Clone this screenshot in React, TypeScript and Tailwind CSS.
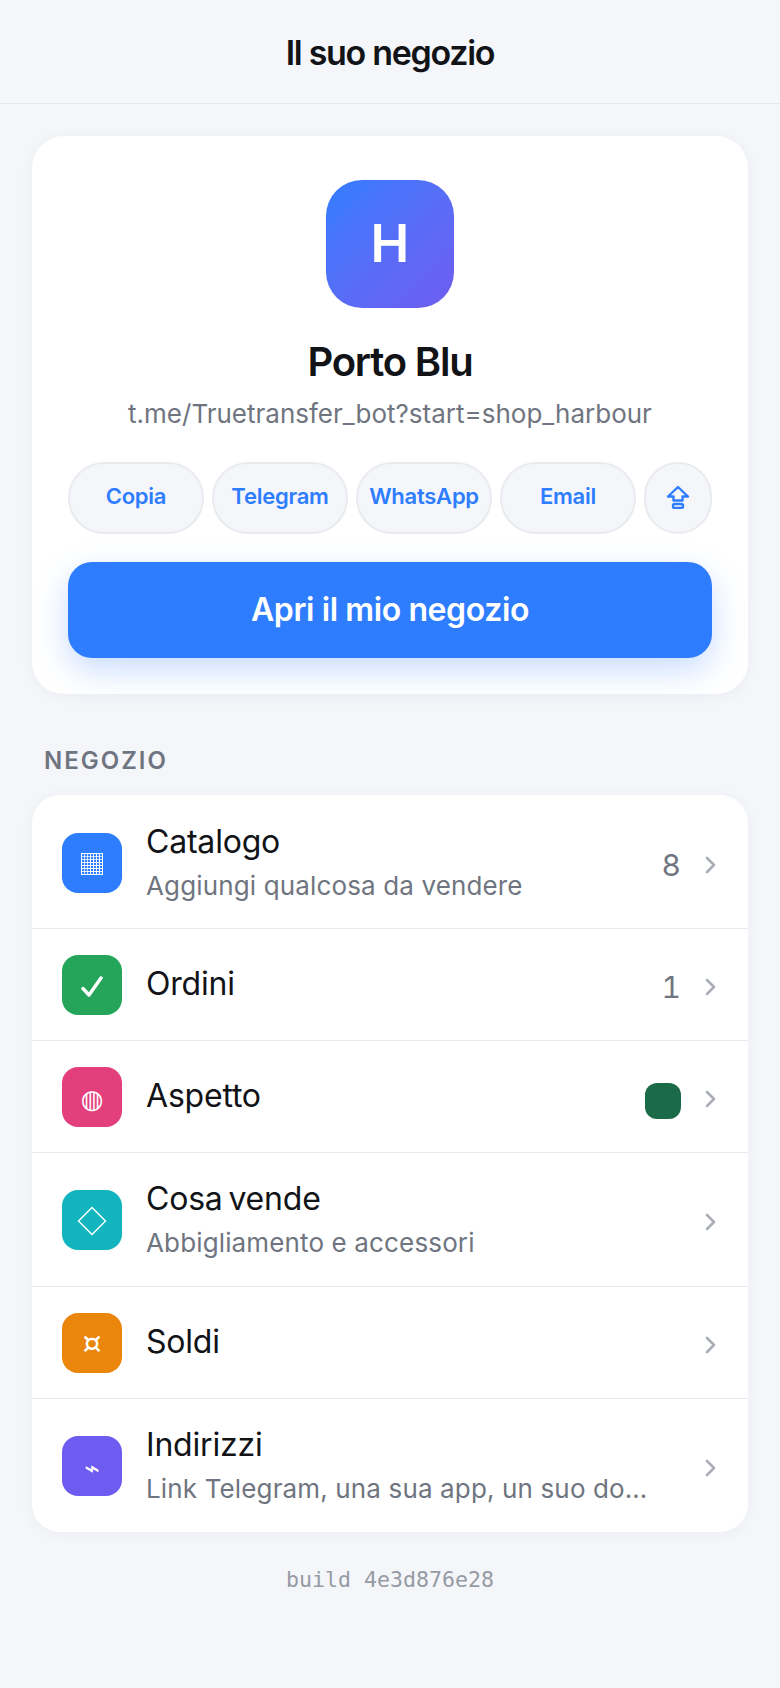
import React from "react";

function GridIcon() {
  const ticks = [0, 1, 2, 3, 4, 5, 6, 7];
  return (
    <svg width="22" height="22" viewBox="0 0 22 22" fill="none" stroke="#ffffff" strokeWidth="1" className="mt-[3px]">
      <rect x="0.5" y="0.5" width="21" height="21" />
      {ticks.map((t) => (
        <path key={t} d={`M${0.5 + t * 3} 0.5V21.5M0.5 ${0.5 + t * 3}H21.5`} opacity={t < 3 ? 0.75 : 0.95} />
      ))}
    </svg>
  );
}

function CheckIcon() {
  return (
    <svg width="22" height="22" viewBox="0 0 22 22" fill="none" className="mt-[5px]">
      <path d="M2 12.5 L8 19 L20 2" stroke="#ffffff" strokeWidth="3.4" strokeLinecap="round" strokeLinejoin="round" />
    </svg>
  );
}

function DiamondIcon() {
  return (
    <svg width="30" height="30" viewBox="0 0 30 30" fill="none" className="mt-[2px]">
      <path d="M15 1.5 L28.5 15 L15 28.5 L1.5 15 Z" stroke="#ffffff" strokeWidth="1.4" />
    </svg>
  );
}

function ShareIcon() {
  return (
    <svg width="24" height="24" viewBox="0 0 24 24" fill="none" stroke="#2e7dff" strokeWidth="2.4" strokeLinejoin="round">
      <path d="M12 2 L22 11.5 H16.5 V15.5 H7.5 V11.5 H2 Z" />
      <rect x="7" y="19" width="10" height="4" rx="1.6" />
    </svg>
  );
}

function Glyph({ children, cls }: { children: string; cls: string }) {
  return <span className={`font-['DejaVu_Sans'] leading-none text-white ${cls}`}>{children}</span>;
}

type Row = {
  icon: React.ReactNode;
  color: string;
  title: string;
  sub?: string;
  value?: string;
  swatch?: boolean;
  h: string;
};

const rows: Row[] = [
  { icon: <GridIcon />, color: "bg-[#2e7dff]", title: "Catalogo", sub: "Aggiungi qualcosa da vendere", value: "8", h: "h-[133px] pt-[2px]" },
  { icon: <CheckIcon />, color: "bg-[#24a55a]", title: "Ordini", value: "1", h: "h-[112px]" },
  { icon: <Glyph cls="text-[26px] pt-[4px]">◍</Glyph>, color: "bg-[#e23f7c]", title: "Aspetto", swatch: true, h: "h-[112px]" },
  { icon: <DiamondIcon />, color: "bg-[#12b5bd]", title: "Cosa vende", sub: "Abbigliamento e accessori", h: "h-[134px]" },
  { icon: <Glyph cls="text-[30px] pt-[1px]">¤</Glyph>, color: "bg-[#e9860b]", title: "Soldi", h: "h-[112px]" },
  { icon: <Glyph cls="text-[26px] pt-[4px]">⌁</Glyph>, color: "bg-[#6e5cf0]", title: "Indirizzi", sub: "Link Telegram, una sua app, un suo dominio", h: "h-[134px]" },
];

function Chevron() {
  return (
    <svg width="11" height="18" viewBox="0 0 11 18" fill="none" className="shrink-0 mt-[5px]">
      <path d="M2 2 L9 9 L2 16" stroke="#a9adb5" strokeWidth="2.6" strokeLinecap="round" strokeLinejoin="round" />
    </svg>
  );
}

export default function App() {
  return (
    <div className="min-h-[1688px] bg-[#f4f6fa] font-['Inter','Noto_Sans',sans-serif] text-[#111317]">
      <header className="h-[104px] flex items-center justify-center border-b border-[#e7e9ee]">
        <h1 className="text-[34px] font-semibold tracking-[-1.3px] leading-none pt-[2px]">Il suo negozio</h1>
      </header>
      <main className="px-8 pt-8">
        <section className="bg-white rounded-[32px] pt-11 pb-9 px-9 flex flex-col items-center shadow-[0_2px_16px_rgba(20,30,60,0.04)]">
          <div className="w-32 h-32 rounded-[36px] bg-gradient-to-br from-[#2e7dff] to-[#6e5cf0] flex items-center justify-center text-white text-[52px] font-semibold leading-none">H</div>
          <h2 className="mt-7 text-[40px] leading-[52px] font-semibold tracking-[-1.2px]">Porto Blu</h2>
          <p className="mt-[9px] text-[26px] leading-[34px] text-[#6f7580]">t.me/Truetransfer_bot?start=shop_harbour</p>
          <div className="mt-[31px] w-full flex gap-2">
            {["Copia", "Telegram", "WhatsApp", "Email"].map((t) => (
              <button key={t} className="flex-1 h-[72px] pb-[3px] rounded-[36px] bg-[#f4f6fa] border-2 border-[#e9ebef] text-[#2e7dff] text-[22px] font-semibold tracking-[-0.25px]">{t}</button>
            ))}
            <button aria-label="Condividi" className="w-[68px] h-[72px] pb-[2px] shrink-0 rounded-[36px] bg-[#f4f6fa] border-2 border-[#e9ebef] flex items-center justify-center">
              <ShareIcon />
            </button>
          </div>
          <button className="mt-7 w-full h-24 rounded-[24px] bg-[#2e7dff] text-white text-[32px] font-semibold tracking-[-0.4px] shadow-[0_12px_32px_rgba(46,125,255,0.26)]">Apri il mio negozio</button>
        </section>

        <h3 className="mt-[51px] mb-[18px] pl-3 text-[24px] leading-8 font-semibold tracking-[2px] text-[#6f7580]">NEGOZIO</h3>

        <section className="bg-white rounded-[28px] overflow-hidden shadow-[0_2px_16px_rgba(20,30,60,0.04)]">
          {rows.map((r, i) => (
            <div key={r.title} className={`flex items-center pl-[30px] pr-8 gap-6 ${r.h} ${i > 0 ? "border-t border-[#e7e9ee]" : ""}`}>
              <div className={`w-[60px] h-[60px] shrink-0 rounded-2xl ${r.color} flex items-center justify-center`}>{r.icon}</div>
              <div className="flex-1 min-w-0 pb-[1px]">
                <div className="text-[32px] leading-10 tracking-[-0.2px] [word-spacing:-3px]">{r.title}</div>
                {r.sub && <div className="mt-[7px] max-w-[506px] text-[26px] leading-[34px] tracking-[0.14px] text-[#6f7580] truncate">{r.sub}</div>}
              </div>
              {r.value && <span className="text-[30px] mt-[6px] tabular-nums text-[#6f7580]">{r.value}</span>}
              {r.swatch && <span className="w-9 h-9 mt-[9px] rounded-xl bg-[#1b6b49]" />}
              <Chevron />
            </div>
          ))}
        </section>

        <p className="mt-[34px] text-center text-[21.6px] leading-7 text-[#969aa3] font-['DejaVu_Sans_Mono',monospace]">build 4e3d876e28</p>
      </main>
    </div>
  );
}
